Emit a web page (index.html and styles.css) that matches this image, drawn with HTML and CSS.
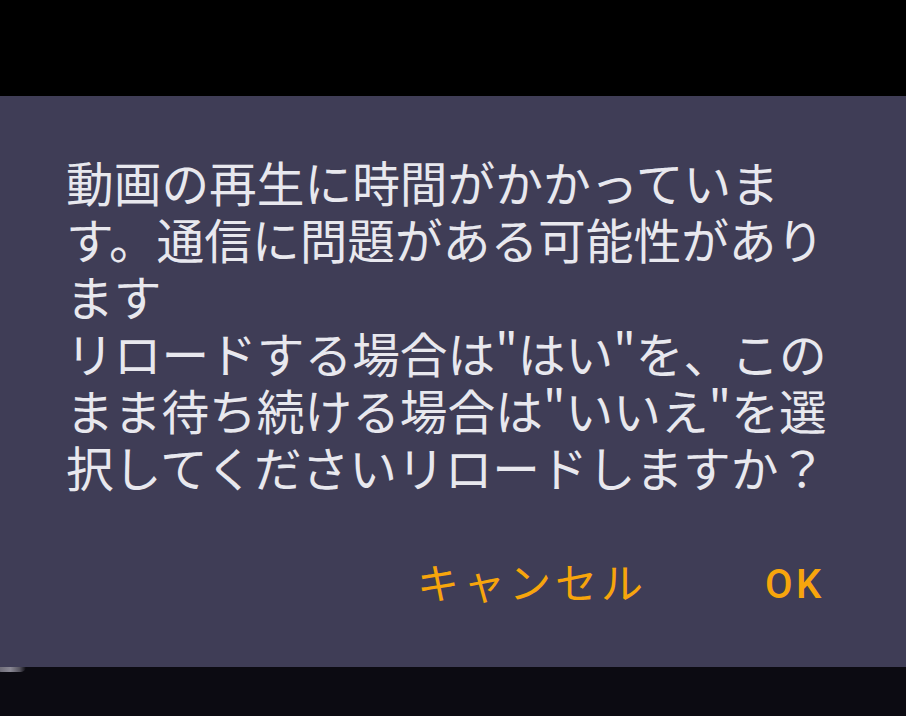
FILE: index.html
```html
<!DOCTYPE html>
<html lang="ja">
<head>
<meta charset="utf-8">
<title>Dialog</title>
<link rel="stylesheet" href="styles.css">
</head>
<body>
<div class="screen">
  <div class="topbar"></div>
  <div class="dialog">
    <p class="message">動画の再生に時間がかかっています。通信に問題がある可能性があります<br>リロードする場合は"はい"を、このまま待ち続ける場合は"いいえ"を選択してくださいリロードしますか？</p>
    <div class="actions">
      <button class="btn btn-cancel">キャンセル</button>
      <button class="btn btn-ok">OK</button>
    </div>
  </div>
  <div class="bottombar"><span class="peek"></span></div>
</div>
</body>
</html>
```
FILE: styles.css
```css
html, body {
  margin: 0;
  padding: 0;
  background: #000;
}
.screen {
  width: 906px;
  height: 716px;
  display: flex;
  flex-direction: column;
  overflow: hidden;
}
.topbar {
  height: 96px;
  background: #000;
  flex: none;
}
.dialog {
  height: 571px;
  flex: none;
  background: #3f3d56;
  box-sizing: border-box;
  padding: 57px 66px 0 66px;
  display: flex;
  flex-direction: column;
}
.message {
  margin: 0;
  font-family: "Noto Sans CJK JP", "Noto Sans", sans-serif;
  font-size: 47.7px;
  line-height: 57px;
  color: #e8e8ee;
  font-weight: 400;
}
.actions {
  display: flex;
  justify-content: flex-end;
  align-items: center;
  gap: 118px;
  margin-top: 66px;
  padding-right: 15px;
}
.btn {
  background: none;
  border: 0;
  padding: 0;
  font-family: Roboto, "Noto Sans CJK JP", sans-serif;
  font-size: 40px;
  letter-spacing: 3.6px;
  color: #f7a50c;
  line-height: 48px;
  font-weight: 400;
}
.btn-cancel {
  font-size: 42px;
  letter-spacing: 4px;
}
.btn-ok {
  font-weight: 500;
  font-size: 40px;
}
.bottombar {
  flex: 1;
  background: #0c0b12;
  position: relative;
}
.peek {
  position: absolute;
  left: 0;
  top: 0;
  width: 26px;
  height: 5px;
  background: linear-gradient(90deg, #6e6c78, #8a8894 40%, #55535e 75%, rgba(12,11,18,0));
  border-radius: 0 0 12px 2px;
}
```
